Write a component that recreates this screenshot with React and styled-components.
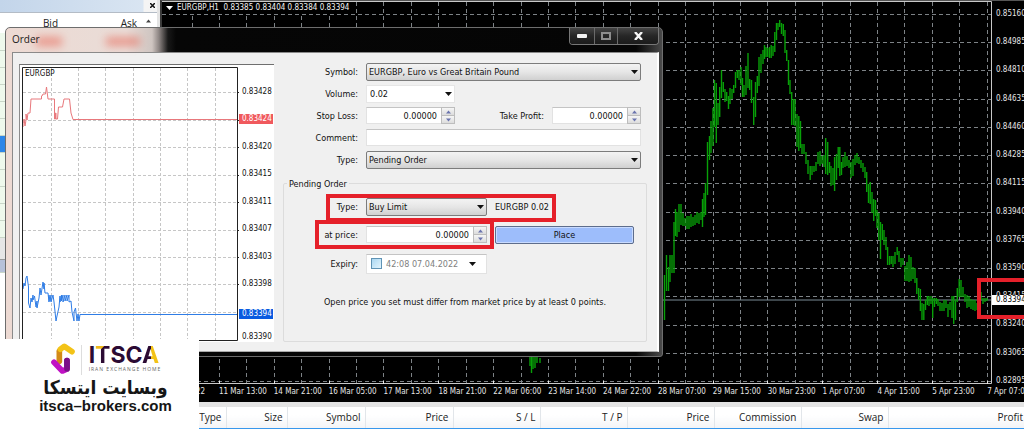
import React from "react";
import styled, { createGlobalStyle, css } from "styled-components";

const dialogFont = `"DejaVu Sans Condensed", "DejaVu Sans", sans-serif`;
const uiFont = `"Open Sans", "Noto Sans", sans-serif`;

const GlobalStyle = createGlobalStyle`
  *, *::before, *::after { box-sizing: border-box; }
  body { margin: 0; background: #fff; overflow: hidden; }
`;

const Page = styled.div`
  position: relative;
  display: flex;
  flex-direction: column;
  min-height: 100vh;
  overflow: hidden;
  font: 10px/14px ${uiFont};
  color: #222;
`;

const Workspace = styled.main`
  flex: 1;
  display: flex;
  background: #000;
`;

/* ---------- market watch ---------- */

const Watch = styled.section`
  flex: none;
  width: 160px;
  display: flex;
  flex-direction: column;
  background: #fff;
  border-right: 3px solid #e4e4e4;
`;

const WatchBar = styled.header`
  display: flex;
  justify-content: flex-end;
  height: 13px;
  background: linear-gradient(90deg, #c3d5ea, #d9e5f2 143px, #f4f4f4 144px);
  border-bottom: 1px solid #b4bcc6;
`;

const CloseButton = styled.button`
  width: 10px;
  height: 11px;
  padding: 0;
  border: 0;
  background: none;
  display: grid;
  place-items: center;
`;

const WatchTable = styled.table`
  width: 100%;
  table-layout: fixed;
  border-collapse: collapse;
  th {
    height: 20px;
    padding: 0 6px 0 0;
    font-weight: 400;
    text-align: right;
    color: #222;
  }
  th svg {
    display: block;
    margin: 0 0 4px auto;
  }
`;

const WatchRow = styled.tr`
  height: ${(p) => p.$height || 17}px;
  background: ${(p) => p.$fill || "#eef9ec"};
  border-bottom: 1px solid ${(p) => p.$line || "#c9d6c8"};
`;

/* ---------- price chart ---------- */

const Chart = styled.section`
  position: relative;
  flex: 1;
  min-width: 0;
  display: flex;
  flex-direction: column;
  background: #000;
  border-left: 2px solid #3a3a3a;
  border-top: 1px solid #555;
  color: #e6e6e6;
  font: 8px/12px ${dialogFont};
  overflow: hidden;
`;

const ChartTitle = styled.h1`
  position: absolute;
  top: 1px;
  left: 4px;
  margin: 0;
  display: flex;
  align-items: center;
  gap: 4px;
  font: inherit;
  color: #f4f4f4;
  white-space: pre;
  background: #000;
`;

const PlotRow = styled.div`
  display: flex;
  height: 387px;
`;

const Plot = styled.svg`
  flex: 1;
  min-width: 0;
  height: 383px;
  display: block;
`;

const PriceAxis = styled.div`
  flex: none;
  width: 32px;
  height: 387px;
  padding: 7px 0 1px 4px;
  display: flex;
  flex-direction: column;
  justify-content: space-between;
`;

const PriceTag = styled.output`
  position: absolute;
  right: 0;
  top: 294px;
  width: 32px;
  height: 10px;
  padding-left: 4px;
  line-height: 10px;
  background: #fff;
  color: #000;
`;

const TimeAxis = styled.div`
  display: grid;
  grid-template-columns: repeat(16, 1fr);
  margin: -2px -18px 0 2px;
  height: 16px;
  white-space: nowrap;
`;

const Mark = styled.div`
  position: absolute;
  left: ${(p) => p.$left}px;
  top: ${(p) => p.$top}px;
  width: ${(p) => p.$width}px;
  height: ${(p) => p.$height}px;
  border: 4px solid #e5202a;
  pointer-events: none;
`;

const ChartMark = styled(Mark)`
  left: auto;
  right: -6px;
`;

/* ---------- terminal ---------- */

const Terminal = styled.section`
  flex: none;
  border-top: 5px solid #e3e3e3;
  border-bottom: 2px solid #3797ec;
  background: #fff;
`;

const TerminalTable = styled.table`
  width: 100%;
  table-layout: fixed;
  border-collapse: collapse;
  th {
    height: 21px;
    padding: 0 4px 2px;
    font-weight: 400;
    text-align: right;
    border-right: 1px solid #e2e6ea;
    background: linear-gradient(#fff 40%, #f3f4f6);
  }
  th:last-child { border-right: 0; padding-right: 1px; }
`;

/* ---------- order dialog ---------- */

const Dialog = styled.section`
  position: absolute;
  left: 5px;
  top: 27px;
  width: 658px;
  border: 1px solid #6d6d6d;
  border-radius: 5px 5px 3px 3px;
  padding: 0 3px 4px 6px;
  background: linear-gradient(90deg, #eddad3 0, #e9dcd7 120px, #cfc5c1 146px, #8d8583 153px, #181818 162px, #060606 170px, #050505 630px, #4a4a4a 100%);
  font: 9px/12px ${dialogFont};
  color: #111;
`;

const TitleBar = styled.header`
  position: relative;
  display: flex;
  justify-content: space-between;
  height: 24px;
`;

const DialogTitle = styled.h2`
  position: relative;
  margin: 4px 0 0;
  font: 10px/14px ${uiFont};
  color: #1a1a1a;
`;

const Ghost = styled.i`
  position: absolute;
  top: 9px;
  left: ${(p) => p.$left}px;
  width: ${(p) => p.$width}px;
  height: 9px;
  background: #e8604f;
  opacity: 0.55;
  filter: blur(4px);
`;

const WindowButtons = styled.div`
  display: flex;
  height: 17px;
  border: 1px solid #777;
  border-top: 0;
  border-radius: 0 0 4px 4px;
  overflow: hidden;
`;

const WindowButton = styled.button`
  width: ${(p) => p.$width}px;
  padding: 0;
  border: 0;
  border-right: 1px solid #6a6a6a;
  background: linear-gradient(#444, #262626 50%, #1b1b1b);
  display: grid;
  place-items: center;
  &:last-child { border-right: 0; }
`;

const DialogBody = styled.div`
  display: flex;
  gap: 9px;
  height: 300px;
  padding: 11px 10px 9px 6px;
  background: #f0f0f0;
  border: 1px solid #8a8a8a;
  border-right: 2px solid #fff;
  border-bottom-color: #aaa;
`;

const TickPanel = styled.div`
  flex: none;
  width: 255px;
  height: 278px;
  display: flex;
  background: #fff;
  border-top: 1px solid #6f6f6f;
  border-left: 1px solid #8c8c8c;
  padding: 2px 0 0 2px;
  font-size: 8px;
`;

const TickPlot = styled.svg`
  flex: none;
  width: 217px;
  height: 274px;
  display: block;
`;

const TickAxis = styled.div`
  flex: 1;
  display: flex;
  flex-direction: column;
  padding-top: 20px;
`;

const TickScale = styled.div`
  display: flex;
  flex-direction: column;
  justify-content: space-between;
  height: 202px;
  margin-bottom: 20px;
`;

const TickLabel = styled.span`
  height: 10px;
  padding-left: 3px;
  line-height: 10px;
  margin-right: 1px;
  ${(p) => p.$fill && css`background: ${p.$fill}; color: #fff;`}
`;

const LastTick = styled(TickLabel)`
  margin-top: 13px;
`;

const Form = styled.form`
  flex: 1;
  min-width: 0;
  display: flex;
  flex-direction: column;
  margin-top: -1px;
`;

const Row = styled.div`
  display: grid;
  grid-template-columns: 75px ${(p) => p.$columns || "1fr"};
  column-gap: 8px;
  align-items: center;
  height: 18px;
  margin: 0 6px 4px 0;
`;

const Label = styled.label`
  text-align: right;
  white-space: nowrap;
`;

const SelectBox = styled.span`
  position: relative;
  display: block;
  height: 18px;
  svg {
    position: absolute;
    right: 3px;
    top: 7px;
    pointer-events: none;
  }
`;

const Select = styled.select`
  appearance: none;
  display: block;
  width: 100%;
  height: 18px;
  margin: 0;
  padding: 0 14px 0 ${(p) => (p.$plain ? 3 : 2)}px;
  font: inherit;
  color: #111;
  border: 1px solid ${(p) => (p.$plain ? "#e6e6e6" : "#7c7c7c")};
  border-radius: ${(p) => (p.$plain ? 0 : 2)}px;
  background: ${(p) => (p.$plain ? "#fff" : "linear-gradient(#f3f3f3, #e6e6e6 50%, #d0d0d0)")};
`;

const TextInput = styled.input`
  display: block;
  min-width: 0;
  width: 100%;
  height: 17px;
  margin: 0;
  padding: 0 4px;
  font: inherit;
  color: #111;
  border: 1px solid #e2e2e2;
  border-top-color: #c4c4c4;
  background: #fff;
  text-align: ${(p) => p.$align || "left"};
`;

const Spinner = styled.span`
  display: flex;
  height: 17px;
  ${TextInput} { flex: 1; border-right: 0; }
`;

const SpinButtons = styled.span`
  flex: none;
  display: flex;
  flex-direction: column;
  width: 14px;
  border: 1px solid #bdbdbd;
`;

const SpinButton = styled.button`
  flex: 1;
  padding: 0;
  border: 0;
  background: linear-gradient(#f6f6f6, #dcdcdc);
  display: grid;
  place-items: center;
  & + & { border-top: 1px solid #bdbdbd; }
`;

const Group = styled.fieldset`
  min-width: 0;
  height: 165px;
  margin: 5px 0 0;
  padding: 8px 0 0;
  border: 1px solid #dcdcdc;
  border-radius: 2px;
  legend {
    margin-left: 3px;
    padding: 0 2px;
  }
`;

const GroupRow = styled.div`
  display: grid;
  grid-template-columns: 74px 121px 139px;
  column-gap: 8px;
  align-items: center;
  height: 18px;
  margin-bottom: 10px;
`;

const PlaceButton = styled.button`
  height: 18px;
  padding: 0;
  font: inherit;
  color: #111;
  border: 1px solid #5d6d8c;
  border-radius: 2px;
  background: #9dbdfb;
  box-shadow: inset 0 0 0 1px #c9dbff;
`;

const DateBox = styled.div`
  display: flex;
  align-items: center;
  gap: 4px;
  height: 20px;
  padding: 0 10px 0 4px;
  background: #fff;
  border: 1px solid #e2e2e2;
  border-top-color: #c4c4c4;
  input[type="checkbox"] {
    appearance: none;
    flex: none;
    width: 11px;
    height: 11px;
    margin: 0;
    border: 1px solid #5f93b5;
    background: linear-gradient(135deg, #aad7f2, #e2f4fd);
  }
  input[type="text"] {
    width: 73px;
    min-width: 0;
    padding: 0;
    border: 0;
    font: inherit;
    color: #808080;
    background: none;
  }
  svg { margin-left: auto; flex: none; }
`;

const Hint = styled.p`
  margin: 24px 0 0;
  text-align: center;
  white-space: nowrap;
`;

/* ---------- brand card ---------- */

const Brand = styled.aside`
  position: absolute;
  left: 0;
  bottom: 0;
  width: 199px;
  height: 91px;
  padding: 4px 0 0 12px;
  display: flex;
  flex-direction: column;
  align-items: center;
  background: #fff;
  color: #161616;
`;

const BrandTop = styled.div`
  display: flex;
  align-items: center;
  height: 33px;
  gap: 4px;
`;

const BrandWords = styled.div`
  padding-left: 7px;
  border-left: 1px solid #ddd;
  height: 30px;
`;

const Wordmark = styled.div`
  font: 700 23px/20px Inter, sans-serif;
  color: #2b0a33;
`;

const TwoTone = styled.span`
  color: transparent;
  background: linear-gradient(${(p) => p.$stops});
  background-clip: text;
  -webkit-background-clip: text;
`;

const Tagline = styled.div`
  font: 5px/8px "Open Sans", sans-serif;
  letter-spacing: 1px;
  color: #666;
  white-space: nowrap;
`;

const BrandName = styled.div`
  font: 700 19px/22px "DejaVu Sans Condensed", "DejaVu Sans", sans-serif;
  white-space: nowrap;
`;

const BrandLink = styled.a`
  font: 700 15px/16px "Liberation Sans", Arial, sans-serif;
  color: inherit;
  text-decoration: none;
  white-space: nowrap;
`;

/* ---------- data ---------- */

const BARS = [
  [530, 357, 366], [531.5, 357, 373], [533, 357, 369], [535, 357, 368], [537, 357, 363], [540, 358, 363],
  [664.5, 275, 320], [666.5, 255, 291], [668.5, 267, 291], [670, 255, 282], [672, 255, 273], [674, 222, 273],
  [675.5, 209, 236], [677, 212, 237], [679, 204, 232], [681, 204, 225], [683, 213, 226], [685, 218, 226],
  [687, 216, 229], [689, 216, 229], [691, 214, 227], [693, 217, 226], [695, 215, 225], [697, 212, 223],
  [699, 213, 224], [701, 212, 220], [702.5, 199, 227], [704, 193, 217], [705.5, 183, 215], [707.5, 142, 195],
  [709.5, 136, 160], [711, 121, 153], [713, 108, 146], [714.5, 80, 127], [716.3, 83, 143], [718, 103, 125],
  [719.7, 87, 117], [721.5, 70, 98], [723.3, 82, 92], [725, 89, 102], [726.7, 92, 101], [728.5, 96, 109],
  [730, 88, 104], [732, 89, 99], [733.7, 85, 93], [735.5, 72, 88], [737.3, 70, 78], [739, 70, 80],
  [741, 67, 85], [742.5, 78, 97], [744, 85, 97], [746, 66, 95], [748, 53, 88], [749.7, 79, 90],
  [751.5, 80, 103], [753.7, 97, 125], [755.5, 82, 117], [757.3, 76, 93], [759, 57, 86], [761, 54, 73],
  [763, 50, 64], [764.5, 45, 59], [766, 47, 57], [767.7, 48, 57], [769.5, 47, 58], [771.2, 45, 58],
  [773, 46, 56], [774.8, 32, 52], [776.5, 23, 40], [778, 23, 30], [779.7, 20, 27], [781.5, 23, 34],
  [783.3, 24, 36], [785, 30, 53], [786.7, 50, 61], [788.5, 60, 85], [790, 80, 94], [791.7, 92, 125],
  [793.5, 99, 125], [795, 99, 126], [797, 114, 147], [798.8, 116, 151], [800.5, 121, 148], [802, 144, 154],
  [804, 144, 154], [806, 152, 164], [808, 160, 174], [810.2, 166, 180], [812, 166, 175], [814, 166, 172],
  [816, 162, 171], [818, 152, 164], [820, 151, 166], [822, 156, 164], [824, 155, 167], [825.7, 138, 174],
  [827.7, 142, 175], [829.5, 162, 173], [831, 166, 186], [833, 168, 185], [834.6, 157, 191], [836.5, 154, 180],
  [838.2, 147, 168], [839.8, 147, 176], [841.5, 162, 175], [843, 157, 168], [845, 152, 167], [847, 156, 166],
  [849, 160, 168], [851, 162, 178], [853, 159, 176], [855, 155, 165], [857, 153, 163], [859, 157, 164],
  [861, 160, 168], [863, 163, 172], [865, 167, 178], [866.7, 172, 192], [868.5, 184, 203], [870.2, 182, 204],
  [872, 192, 213], [873.7, 199, 221], [875.5, 200, 216], [877, 210, 228], [878.8, 213, 240], [880.5, 222, 259],
  [882.3, 224, 240], [884, 230, 245], [886, 237, 250], [887.6, 247, 265], [889.5, 256, 265], [891.2, 256, 264],
  [893, 256, 267], [895, 252, 264], [897.2, 247, 255], [899, 251, 262], [901, 258, 267], [903, 258, 265],
  [905, 266, 281], [907, 262, 281], [909, 255, 282], [911, 257, 281], [913, 267, 279], [915, 268, 283],
  [916.8, 278, 294], [918.6, 288, 300], [920.4, 289, 311], [922, 303, 320], [923.8, 304, 320], [925.5, 300, 310],
  [927.3, 296, 305], [929, 296, 306], [931, 296, 304], [932.7, 298, 318], [934.5, 298, 307], [936.3, 298, 304],
  [938, 299, 306], [940, 302, 311], [942, 303, 311], [944, 300, 311], [946, 300, 308], [948, 304, 317],
  [950, 302, 310], [952, 296, 318], [953.7, 296, 324], [955.5, 300, 320], [957.3, 288, 302], [959.2, 279, 297],
  [961, 280, 297], [963, 287, 297], [965, 294, 302], [967, 295, 308], [969, 296, 307], [971, 299, 309],
  [973, 300, 310], [975, 300, 311], [977, 303, 310], [981, 292, 300], [983, 298, 304], [985, 298, 302], [987, 298, 301],
];

const TIMES = [
  "9 Mar 2022", "11 Mar 13:00", "14 Mar 21:00", "16 Mar 05:00", "17 Mar 13:00", "18 Mar 21:00",
  "22 Mar 06:00", "23 Mar 14:00", "24 Mar 22:00", "28 Mar 07:00", "29 Mar 15:00", "30 Mar 23:00",
  "1 Apr 07:00", "4 Apr 15:00", "5 Apr 23:00", "7 Apr 07:00",
];

const PRICES = [
  "0.85160", "0.84985", "0.84810", "0.84635", "0.84460", "0.84285", "0.84115",
  "0.83940", "0.83765", "0.83590", "0.83415", "0.83240", "0.83065", "0.82895",
];

const TICKS = ["0.83428", "0.83424", "0.83420", "0.83415", "0.83411", "0.83407", "0.83403", "0.83398"];

const COLUMNS = [
  ["Type", 226], ["Size", 61], ["Symbol", 78], ["Price", 88], ["S / L", 87], ["T / P", 87],
  ["Price", 87], ["Commission", 87], ["Swap", 87], ["Profit"],
];

const range = (n) => Array.from({ length: n }, (_, i) => i);

/* ---------- parts ---------- */

const Arrow = ({ up, width = 7, fill = "#111" }) => (
  <svg width={width} height="4" viewBox="0 0 7 4" aria-hidden="true">
    <path d={up ? "M0 4L3.5 0L7 4z" : "M0 0h7L3.5 4z"} fill={fill} />
  </svg>
);

const Dropdown = ({ id, value, plain }) => (
  <SelectBox>
    <Select id={id} $plain={plain} defaultValue={value}>
      <option>{value}</option>
    </Select>
    <Arrow />
  </SelectBox>
);

const NumberField = ({ id }) => (
  <Spinner>
    <TextInput id={id} type="text" inputMode="decimal" defaultValue="0.00000" $align="right" />
    <SpinButtons>
      <SpinButton type="button" aria-label="Increase"><Arrow up width={5} fill="#6a74ae" /></SpinButton>
      <SpinButton type="button" aria-label="Decrease"><Arrow width={5} fill="#6a74ae" /></SpinButton>
    </SpinButtons>
  </Spinner>
);

const PricePlot = () => (
  <Plot viewBox="162 1 830 383" preserveAspectRatio="xMaxYMin slice" role="img" aria-label="EURGBP hourly chart">
    <g stroke="#7d8286" strokeDasharray="4 3" fill="none">
      {range(30).map((i) => {
        const x = Math.round(986.7 - i * 27.42) + 0.5;
        return <path key={i} d={`M${x} 2V383`} />;
      })}
      {PRICES.map((p, i) => {
        const y = Math.round(14 + i * 28.23) + 0.5;
        return <path key={p} d={`M162 ${y}H991`} />;
      })}
    </g>
    <path d="M162 300H991" stroke="#7b8b95" />
    <g stroke="#08a008" strokeWidth="1.4">
      {BARS.map(([x, hi, lo]) => <path key={x} d={`M${x} ${hi}V${lo}`} />)}
    </g>
    <path d="M162 1.5H991.5V383.5H162" stroke="#c8c8c8" fill="none" />
    <g stroke="#e8e8e8">
      {range(16).map((i) => {
        const x = Math.round(986.7 - i * 54.84) + 0.5;
        return <path key={i} d={`M${x} 381V386`} />;
      })}
    </g>
  </Plot>
);

const TickChart = () => (
  <TickPlot viewBox="22 67 217 274" role="img" aria-label="EURGBP tick chart">
    <g stroke="#c6c6c6" strokeDasharray="3 2" fill="none">
      {[51, 78, 105, 133, 160, 187, 215].map((x) => <path key={x} d={`M${x + 0.5} 68V340`} />)}
      {[92, 120, 147, 175, 202, 230, 257, 284, 312].map((y) => <path key={y} d={`M23 ${y + 0.5}H237`} />)}
    </g>
    <path
      d="M23 127V122H24V119L25 126L26 120V114L27 120L28 113H30L31 99H41.500V96H42L43 94H45.500L46.500 87L48 99H54.500V119H55.500V113H56V119H57.500L58.500 107H62.500L64 99H69.500L71 113L73 119.500H237"
      fill="none" stroke="#e8787c"
    />
    <path
      d="M23 289L24 283L25 286L26 278L27 276L28.500 287V303L30 308L31 298L32 302L33 295V300L34.500 296L36 307L37 301V308L39 298L40 288L41 295L43 282L44 289V283L45 293H48L49 302V295L50 301L51 295V302L53 295L54 302L56 321L57 316L59 307L60 296V302L61.500 295V301L63 295V302L65 295V301L67 295V301L69 295V302L71 301L72 312L74 321V312L75.500 308L77 321L78 314L79 321L80 314.500H237"
      fill="none" stroke="#2f7de6"
    />
    <path d="M22.500 341V67.500H237.500V340.500H22" fill="none" stroke="#222" />
    <g stroke="#222">
      {[92, 120, 147, 175, 202, 230, 257, 284].map((y) => <path key={y} d={`M237 ${y + 0.5}h2`} />)}
    </g>
    <text x="25" y="76" fontSize="8" fontFamily="DejaVu Sans Condensed, sans-serif" fill="#111">EURGBP</text>
  </TickPlot>
);

const BrandMark = () => (
  <svg width="27" height="33" viewBox="156 19 81 99" fill="none" strokeWidth="17" strokeLinecap="round" aria-hidden="true">
    <path d="M184 44V74" stroke="#d38a17" />
    <path d="M187 38L199 29L222 45" stroke="#f3c317" strokeLinejoin="round" />
    <path d="M207 96V72" stroke="#7b1088" />
    <path d="M168 77L193 103L203 99" stroke="#c012c4" strokeLinejoin="round" />
    <path d="M207 96V72" stroke="#7b1088" />
  </svg>
);

const OrderDialog = () => (
  <Dialog role="dialog" aria-labelledby="order-title">
    <TitleBar>
      <Ghost $left={24} $width={26} />
      <Ghost $left={94} $width={34} />
      <DialogTitle id="order-title">Order</DialogTitle>
      <WindowButtons>
        <WindowButton $width={25} aria-label="Minimize">
          <svg width="10" height="4"><rect width="10" height="4" rx="1" fill="#f2f2f2" /></svg>
        </WindowButton>
        <WindowButton $width={23} aria-label="Maximize">
          <svg width="10" height="8"><rect x="1" y="1" width="8" height="6" fill="none" stroke="#8d8d8d" strokeWidth="2" /></svg>
        </WindowButton>
        <WindowButton $width={40} aria-label="Close">
          <svg width="9" height="8"><path d="M1 0L8 8M8 0L1 8" stroke="#f4f4f4" strokeWidth="2.400" /></svg>
        </WindowButton>
      </WindowButtons>
    </TitleBar>
    <DialogBody>
      <TickPanel>
        <TickChart />
        <TickAxis>
          <TickScale>
            {TICKS.map((t) => (
              <TickLabel key={t} $fill={t === "0.83424" ? "#f0595d" : undefined}>{t}</TickLabel>
            ))}
          </TickScale>
          <TickLabel $fill="#0a5be0">0.83394</TickLabel>
          <LastTick>0.83390</LastTick>
        </TickAxis>
      </TickPanel>
      <Form onSubmit={(e) => e.preventDefault()}>
        <Row>
          <Label htmlFor="symbol">Symbol:</Label>
          <Dropdown id="symbol" value="EURGBP, Euro vs Great Britain Pound" />
        </Row>
        <Row $columns="89px">
          <Label htmlFor="volume">Volume:</Label>
          <Dropdown id="volume" value="0.02" plain />
        </Row>
        <Row $columns="89px 1fr 89px">
          <Label htmlFor="sl">Stop Loss:</Label>
          <NumberField id="sl" />
          <Label htmlFor="tp">Take Profit:</Label>
          <NumberField id="tp" />
        </Row>
        <Row>
          <Label htmlFor="comment">Comment:</Label>
          <TextInput id="comment" type="text" />
        </Row>
        <Row>
          <Label htmlFor="kind">Type:</Label>
          <Dropdown id="kind" value="Pending Order" />
        </Row>
        <Group>
          <legend>Pending Order</legend>
          <GroupRow>
            <Label htmlFor="pending">Type:</Label>
            <Dropdown id="pending" value="Buy Limit" />
            <span>EURGBP 0.02</span>
          </GroupRow>
          <GroupRow>
            <Label htmlFor="price">at price:</Label>
            <NumberField id="price" />
            <PlaceButton type="submit">Place</PlaceButton>
          </GroupRow>
          <GroupRow>
            <Label htmlFor="expiry">Expiry:</Label>
            <DateBox>
              <input type="checkbox" aria-label="Use expiry" />
              <input id="expiry" type="text" defaultValue="42:08 07.04.2022" />
              <Arrow />
            </DateBox>
          </GroupRow>
          <Hint>Open price you set must differ from market price by at least 0 points.</Hint>
        </Group>
      </Form>
    </DialogBody>
    <Mark $left={320} $top={166} $width={230} $height={28} />
    <Mark $left={309} $top={192} $width={179} $height={29} />
  </Dialog>
);

export default function App() {
  return (
    <Page>
      <GlobalStyle />
      <Workspace>
        <Watch>
          <WatchBar>
            <CloseButton aria-label="Close panel">
              <svg width="5" height="5"><path d="M0 0L5 5M5 0L0 5" stroke="#111" strokeWidth="1.500" /></svg>
            </CloseButton>
          </WatchBar>
          <WatchTable>
            <colgroup><col width="64" /><col width="79" /><col /></colgroup>
            <thead>
              <tr><th>Bid</th><th>Ask</th><th><Arrow up width={5} fill="#444" /></th></tr>
            </thead>
            <tbody>
              {range(6).map((i) => <WatchRow key={i}><td colSpan="3" /></WatchRow>)}
              <WatchRow $fill="#2d86e8"><td colSpan="3" /></WatchRow>
              {range(5).map((i) => <WatchRow key={i}><td colSpan="3" /></WatchRow>)}
              <WatchRow $fill="#e6e6e6" $line="#999" $height={22}><td colSpan="3" /></WatchRow>
              <WatchRow $fill="#b6c1d9" $height={13}><td colSpan="3" /></WatchRow>
            </tbody>
          </WatchTable>
        </Watch>
        <Chart>
          <PlotRow>
            <PricePlot />
            <PriceAxis>{PRICES.map((p) => <span key={p}>{p}</span>)}</PriceAxis>
          </PlotRow>
          <TimeAxis>{TIMES.map((t) => <span key={t}>{t}</span>)}</TimeAxis>
          <ChartTitle>
            <Arrow fill="#fff" />
            {"EURGBP,H1  0.83385 0.83404 0.83384 0.83394"}
          </ChartTitle>
          <PriceTag>0.83394</PriceTag>
          <ChartMark $top={277} $width={53} $height={41} />
        </Chart>
      </Workspace>
      <Terminal>
        <TerminalTable>
          <colgroup>{COLUMNS.map(([name, w], i) => <col key={i} width={w} />)}</colgroup>
          <thead>
            <tr>{COLUMNS.map(([name], i) => <th key={i} scope="col">{name}</th>)}</tr>
          </thead>
        </TerminalTable>
      </Terminal>
      <OrderDialog />
      <Brand>
        <BrandTop>
          <BrandMark />
          <BrandWords>
            <Wordmark>
              I<TwoTone $stops="135deg, #f0b91b 32%, #2b0a33 34%">T</TwoTone>SC
              <TwoTone $stops="90deg, #2b0a33 52%, #f3c317 54%">A</TwoTone>
            </Wordmark>
            <Tagline>IRAN EXCHANGE HOME</Tagline>
          </BrandWords>
        </BrandTop>
        <BrandName lang="fa" dir="rtl">وبسایت ایتسکا</BrandName>
        <BrandLink href="#itsca">itsca–brokers.com</BrandLink>
      </Brand>
    </Page>
  );
}
